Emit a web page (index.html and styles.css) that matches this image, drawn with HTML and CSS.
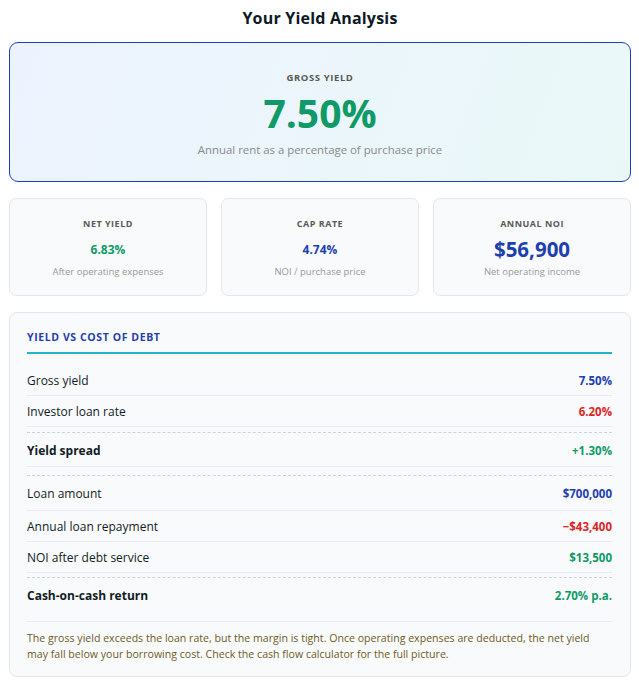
FILE: index.html
```html
<!DOCTYPE html>
<html lang="en">
<head>
<meta charset="utf-8">
<title>Your Yield Analysis</title>
<link rel="stylesheet" href="styles.css">
</head>
<body>
<div class="wrap">
  <h2 class="title">Your Yield Analysis</h2>

  <section class="hero">
    <div class="hero-label">Gross Yield</div>
    <div class="hero-value">7.50%</div>
    <div class="hero-sub">Annual rent as a percentage of purchase price</div>
  </section>

  <div class="stats">
    <div class="stat">
      <div class="stat-label">Net Yield</div>
      <div class="stat-value"><span class="small green">6.83%</span></div>
      <div class="stat-desc">After operating expenses</div>
    </div>
    <div class="stat">
      <div class="stat-label">Cap Rate</div>
      <div class="stat-value"><span class="small blue">4.74%</span></div>
      <div class="stat-desc">NOI / purchase price</div>
    </div>
    <div class="stat">
      <div class="stat-label">Annual NOI</div>
      <div class="stat-value"><span class="big blue">$56,900</span></div>
      <div class="stat-desc">Net operating income</div>
    </div>
  </div>

  <section class="debt">
    <div class="debt-title">Yield vs cost of debt</div>
    <div class="rows">
      <div class="row"><span>Gross yield</span><span class="val blue">7.50%</span></div>
      <div class="row"><span>Investor loan rate</span><span class="val red">6.20%</span></div>
      <div class="row total"><span>Yield spread</span><span class="val green">+1.30%</span></div>
      <div class="row group-start"><span>Loan amount</span><span class="val blue">$700,000</span></div>
      <div class="row"><span>Annual loan repayment</span><span class="val red">&minus;$43,400</span></div>
      <div class="row"><span>NOI after debt service</span><span class="val green">$13,500</span></div>
      <div class="row total last"><span>Cash-on-cash return</span><span class="val green">2.70% p.a.</span></div>
    </div>
    <p class="note">The gross yield exceeds the loan rate, but the margin is tight. Once operating expenses are deducted, the net yield may fall below your borrowing cost. Check the cash flow calculator for the full picture.</p>
  </section>
</div>
</body>
</html>
```

FILE: styles.css
```css
* { box-sizing: border-box; }

html, body {
  margin: 0;
  padding: 0;
  background: #ffffff;
}

body {
  font-family: "Open Sans", "DejaVu Sans", sans-serif;
  color: #0f1c26;
}

.wrap {
  padding: 0 8px 0 9px;
}

.title {
  margin: 0;
  padding-top: 7px;
  font-size: 16px;
  line-height: 22px;
  font-weight: 700;
  letter-spacing: 0.2px;
  text-align: center;
  color: #0c1a24;
}

.hero {
  margin-top: 13px;
  height: 140px;
  border: 1px solid #1e40af;
  border-radius: 9px;
  background: linear-gradient(110deg, #edf3fe 0%, #ebf6fb 55%, #e9f8f7 100%);
  text-align: center;
  padding-top: 28px;
}

.hero-label {
  font-size: 9.5px;
  line-height: 14px;
  font-weight: 700;
  letter-spacing: 0.6px;
  text-transform: uppercase;
  color: #595959;
}

.hero-value {
  margin-top: 6px;
  font-size: 39px;
  line-height: 44px;
  font-weight: 700;
  color: #0f9a67;
}

.hero-sub {
  margin-top: 7px;
  font-size: 11.4px;
  line-height: 16px;
  color: #8a8a8a;
}

.stats {
  margin-top: 16px;
  display: grid;
  grid-template-columns: repeat(3, 1fr);
  gap: 14px;
}

.stat {
  height: 98px;
  border: 1px solid #e3e7ec;
  border-radius: 7px;
  background: #f8fafc;
  text-align: center;
  padding-top: 19px;
}

.stat-label {
  font-size: 9px;
  line-height: 12px;
  font-weight: 700;
  letter-spacing: 0.5px;
  text-transform: uppercase;
  color: #595959;
}

.stat-value {
  margin-top: 7px;
  height: 24px;
  display: flex;
  align-items: center;
  justify-content: center;
  font-weight: 700;
}

.stat-value .small { font-size: 12px; }
.stat-value .big { font-size: 20.5px; }

.stat-desc {
  margin-top: 4px;
  font-size: 9.5px;
  line-height: 14px;
  color: #9a9a9a;
}

.green { color: #0f9a67; }
.blue { color: #1e40af; }
.red { color: #dc2626; }

.debt {
  margin-top: 16px;
  border: 1px solid #e3e7ec;
  border-radius: 8px;
  background: #f8fafc;
  padding: 17px 18px 14px 17px;
}

.debt-title {
  font-size: 10.5px;
  line-height: 14px;
  font-weight: 700;
  letter-spacing: 0.6px;
  text-transform: uppercase;
  color: #1e40af;
  padding-bottom: 8px;
  border-bottom: 2px solid #22b6c4;
}

.rows {
  margin-top: 11px;
}

.row {
  display: flex;
  justify-content: space-between;
  align-items: center;
  padding: 8px 0 7px;
  border-bottom: 1px solid #e8ecf1;
  font-size: 12px;
  line-height: 15px;
  color: #111c24;
}

.row .val {
  font-weight: 700;
  font-size: 11.5px;
}

.row.total {
  margin-top: 5px;
  border-top: 1px dashed #c9d3e2;
  padding: 10px 0 8px;
  font-weight: 700;
}

.row.group-start {
  margin-top: 8px;
  border-top: 1px dashed #c9d3e2;
  padding: 10px 0 9px;
}

.row.total.last {
  margin-top: 4px;
  padding: 10px 0 18px;
}

.note {
  margin: 0;
  padding-top: 9px;
  font-size: 10.6px;
  line-height: 15.5px;
  color: #6e5a1d;
}
```
